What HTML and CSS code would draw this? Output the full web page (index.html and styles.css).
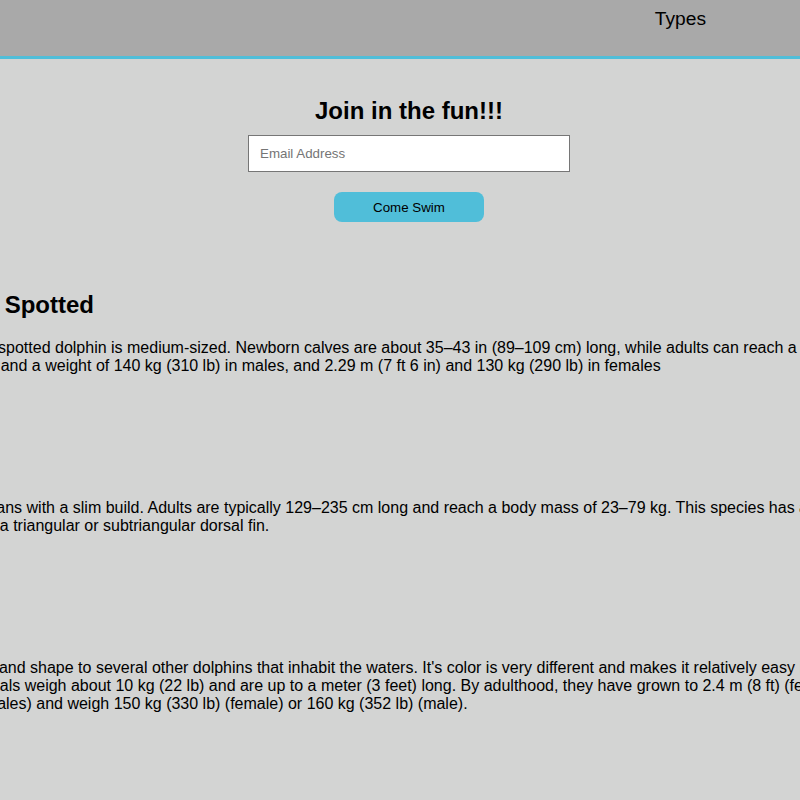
FILE: index.html
```html
<!DOCTYPE html>
<html lang="en">
<head>
<meta charset="utf-8">
<title>Dolphins</title>
<link rel="stylesheet" href="styles.css">
</head>
<body>
<header class="topbar">
  <nav class="nav">
    <a class="nav-link" href="#types">Types</a>
  </nav>
</header>

<section class="signup">
  <h1 class="signup-title">Join in the fun!!!</h1>
  <input class="signup-input" type="email" placeholder="Email Address">
  <button class="signup-button" type="button">Come Swim</button>
</section>

<main class="types" id="types">
  <article class="type">
    <h2 class="type-title">Atlantic Spotted</h2>
    <p class="type-text">The Atlantic spotted dolphin is medium-sized. Newborn calves are about 35–43 in (89–109 cm) long, while adults can reach a length of<br>2.26 m (7 ft) and a weight of 140 kg (310 lb) in males, and 2.29 m (7 ft 6 in) and 130 kg (290 lb) in females</p>
  </article>
  <article class="type">
    <h2 class="type-title">Spinner</h2>
    <p class="type-text">Lithe cetaceans with a slim build. Adults are typically 129–235 cm long and reach a body mass of 23–79 kg. This species has a long<br>rostrum and a triangular or subtriangular dorsal fin.</p>
  </article>
  <article class="type">
    <h2 class="type-title">Risso's</h2>
    <p class="type-text">Alike in size and shape to several other dolphins that inhabit the waters. It's color is very different and makes it relatively easy  in the wild.<br>At birth animals weigh about 10 kg (22 lb) and are up to a meter (3 feet) long. By adulthood, they have grown to 2.4 m (8 ft) (females) or 2.6 m<br>(8.5 feet) (males) and weigh 150 kg (330 lb) (female) or 160 kg (352 lb) (male).</p>
  </article>
</main>
</body>
</html>
```

FILE: styles.css
```css
html {
  overflow-x: hidden;
}

body {
  margin: 0;
  background: #d3d4d3;
  color: #000;
  font-family: "Liberation Sans", Arial, sans-serif;
}

.topbar {
  background: #a9a9a9;
  border-bottom: 3px solid #50bed9;
  display: flex;
  justify-content: flex-end;
  align-items: flex-start;
  padding: 8px 94px 0 0;
  height: 48px;
}

.nav {
  display: flex;
  gap: 24px;
}

.nav-link {
  color: #000;
  text-decoration: none;
  font-size: 19.2px;
}

.signup {
  display: flex;
  flex-direction: column;
  align-items: center;
  padding: 38px 0 31px 18px;
}

.signup-title {
  margin: 0;
  font-size: 24px;
  line-height: 28px;
  font-weight: bold;
}

.signup-input {
  margin-top: 10px;
  width: 322px;
  height: 37px;
  box-sizing: border-box;
  border: 1px solid #767676;
  border-radius: 0;
  background: #fff;
  padding: 0 11px;
  font-family: "Liberation Sans", Arial, sans-serif;
  font-size: 13.33px;
  outline: none;
}

.signup-input::placeholder {
  color: #757575;
}

.signup-button {
  margin-top: 20px;
  width: 150px;
  height: 30px;
  border: none;
  border-radius: 8px;
  background: #50bed9;
  color: #000;
  font-family: "Liberation Sans", Arial, sans-serif;
  font-size: 13.33px;
  padding: 0;
}

.types {
  margin-left: -90px;
}

.type {
  padding: 38px 0;
  height: 84px;
}

.type-title {
  margin: 0 0 20px;
  font-size: 24px;
  line-height: 28px;
  white-space: nowrap;
}

.type-text {
  margin: 0;
  font-size: 16px;
  line-height: 18px;
  white-space: nowrap;
}
```
